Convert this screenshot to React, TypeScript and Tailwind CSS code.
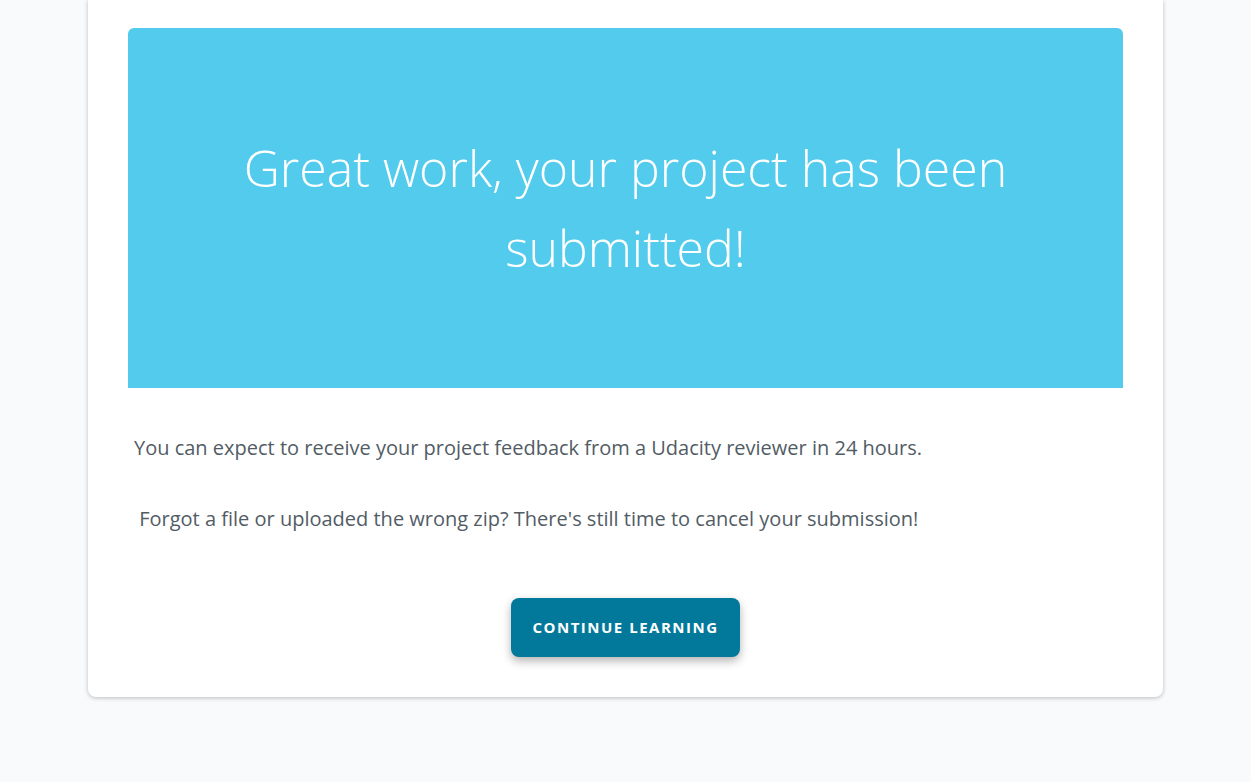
import React from "react";

export default function App() {
  return (
    <div
      className="min-h-[782px] w-full bg-[#f9fafc]"
      style={{ fontFamily: '"Open Sans", "Liberation Sans", sans-serif' }}
    >
      <div className="mx-[88px] w-[1075px] rounded-b-lg bg-white px-[40px] pt-[28px] pb-[40px] shadow-[0_1px_4px_rgba(0,0,0,0.25)]">
        <div className="flex h-[360px] items-center justify-center rounded-t-[6px] bg-[#52cbec] px-[100px]">
          <h1 className="max-w-[780px] text-center text-[50px] font-light leading-[80px] text-white">
            Great work, your project has been submitted!
          </h1>
        </div>
        <div className="pt-[46px] text-[20px] leading-[28px] text-[#525c65]">
          <p className="pl-[6px]">
            You can expect to receive your project feedback from a Udacity reviewer in 24 hours.
          </p>
          <p className="mt-[43px] pl-[6px]">
            {"\u00a0Forgot a file or uploaded the wrong zip? There's still time to cancel your submission!"}
          </p>
        </div>
        <div className="mt-[65px] flex justify-center">
          <button className="h-[59px] w-[229px] rounded-lg bg-[#02789b] text-[15px] font-bold tracking-[0.1em] text-white shadow-[0_4px_10px_rgba(0,0,0,0.3)]">
            CONTINUE LEARNING
          </button>
        </div>
      </div>
    </div>
  );
}
